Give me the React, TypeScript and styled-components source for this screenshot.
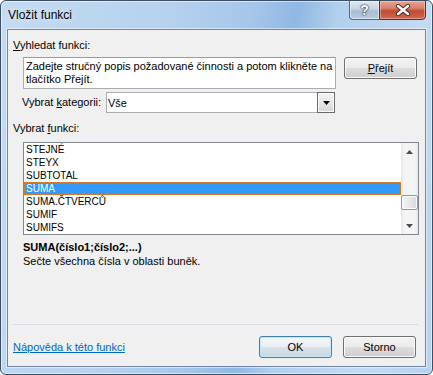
import styled, { createGlobalStyle } from 'styled-components';

const GlobalStyle = createGlobalStyle`
  html, body {
    margin: 0;
    padding: 0;
    background: #ffffff;
  }
  body {
    font-family: 'Liberation Sans', Arial, sans-serif;
    font-size: 11px;
    color: #000;
  }
`;

const functions = ['STEJNÉ', 'STEYX', 'SUBTOTAL', 'SUMA', 'SUMA.ČTVERCŮ', 'SUMIF', 'SUMIFS'];
const selected = 'SUMA';

const App = () => {
  return (
    <>
      <GlobalStyle />
      <S.Window>
        <S.TitleBar>
          <S.Title>Vložit funkci</S.Title>
          <S.CaptionButtons>
            <S.HelpButton>?</S.HelpButton>
            <S.CloseButton>
              <svg width="16" height="12" viewBox="0 0 16 12">
                <path d="M3 2 L13 10 M13 2 L3 10" stroke="#4a2a26" strokeWidth="4.2" strokeLinecap="round" />
                <path d="M3 2 L13 10 M13 2 L3 10" stroke="#ffffff" strokeWidth="2.4" strokeLinecap="round" />
              </svg>
            </S.CloseButton>
          </S.CaptionButtons>
        </S.TitleBar>

        <S.Client>
          <S.Label $indent={5} $top={8}>
            <u>V</u>yhledat funkci:
          </S.Label>
          <S.SearchRow>
            <S.SearchBox>
              Zadejte stručný popis požadované činnosti a potom klikněte na
              <br />
              tlačítko Přejít.
            </S.SearchBox>
            <S.Button>
              <u>P</u>řejít
            </S.Button>
          </S.SearchRow>

          <S.CategoryRow>
            <S.CategoryLabel>
              Vybrat <u>k</u>ategorii:
            </S.CategoryLabel>
            <S.Select>
              <S.SelectValue>Vše</S.SelectValue>
              <S.DropButton>
                <svg width="7" height="4" viewBox="0 0 7 4">
                  <path d="M0 0 H7 L3.5 4 Z" fill="#000" />
                </svg>
              </S.DropButton>
            </S.Select>
          </S.CategoryRow>

          <S.Label $indent={5} $top={8}>
            Vybrat <u>f</u>unkci:
          </S.Label>
          <S.ListBox>
            <S.Rows>
              {functions.map((name) => (
                <S.Row key={name} $active={name === selected}>
                  {name}
                </S.Row>
              ))}
            </S.Rows>
            <S.ScrollBar>
              <S.ScrollArrow>
                <svg width="7" height="4" viewBox="0 0 7 4">
                  <path d="M3.5 0 L7 4 H0 Z" fill="#4b4b4b" />
                </svg>
              </S.ScrollArrow>
              <S.Track>
                <S.Thumb />
              </S.Track>
              <S.ScrollArrow>
                <svg width="7" height="4" viewBox="0 0 7 4">
                  <path d="M0 0 H7 L3.5 4 Z" fill="#4b4b4b" />
                </svg>
              </S.ScrollArrow>
            </S.ScrollBar>
          </S.ListBox>

          <S.Signature>SUMA(číslo1;číslo2;...)</S.Signature>
          <S.Description>Sečte všechna čísla v oblasti buněk.</S.Description>

          <S.Separator />

          <S.Footer>
            <S.HelpLink href="#">Nápověda k této funkci</S.HelpLink>
            <S.FooterButtons>
              <S.Button $default>OK</S.Button>
              <S.Button>Storno</S.Button>
            </S.FooterButtons>
          </S.Footer>
        </S.Client>
      </S.Window>
    </>
  );
};

export default App;

const S = {
  Window: styled.div`
    box-sizing: border-box;
    width: 433px;
    height: 375px;
    display: flex;
    flex-direction: column;
    border: 1px solid #3c4e63;
    border-radius: 6px;
    box-shadow: inset 0 0 0 1px rgba(255, 255, 255, 0.55);
    background: linear-gradient(
      100deg,
      #c4dbf2 0%,
      #b6d1ee 35%,
      #a4c5ea 52%,
      #8fb8e3 60%,
      #b2cfee 68%,
      #c3daf2 85%,
      #b9d3ef 100%
    );
    overflow: hidden;
  `,
  TitleBar: styled.div`
    height: 28px;
    display: flex;
    align-items: flex-start;
    padding: 0 6px 0 7px;
  `,
  Title: styled.div`
    font-size: 12px;
    line-height: 15px;
    margin-top: 7px;
    color: #000;
    text-shadow: 0 0 6px rgba(255, 255, 255, 0.9);
  `,
  CaptionButtons: styled.div`
    margin-left: auto;
    margin-top: -1px;
    display: flex;
  `,
  HelpButton: styled.div`
    box-sizing: border-box;
    width: 30px;
    height: 20px;
    border: 1px solid #56687e;
    border-right: none;
    border-radius: 0 0 0 4px;
    background: linear-gradient(#dfe8f2 0%, #c5d4e4 45%, #a9bdd3 55%, #b9cbe0 100%);
    box-shadow: inset 0 0 0 1px rgba(255, 255, 255, 0.5);
    display: flex;
    align-items: center;
    justify-content: center;
    font-weight: bold;
    font-size: 14px;
    color: #fff;
    text-shadow: 0 0 1px #2c3a4a, 0 0 1px #2c3a4a, 0 0 2px #2c3a4a;
  `,
  CloseButton: styled.div`
    box-sizing: border-box;
    width: 47px;
    height: 20px;
    border: 1px solid #5e2a22;
    border-radius: 0 0 4px 0;
    background: linear-gradient(#e8a595 0%, #d9806c 40%, #c24a33 55%, #cf6a4f 100%);
    box-shadow: inset 0 0 0 1px rgba(255, 220, 210, 0.45);
    display: flex;
    align-items: center;
    justify-content: center;
  `,
  Client: styled.div`
    flex: 1;
    margin: 0 6px 7px 6px;
    border: 1px solid #6f87a3;
    box-shadow: 0 0 0 1px rgba(255, 255, 255, 0.5);
    background: #f0f0f0;
    display: flex;
    flex-direction: column;
  `,
  Label: styled.div<{ $indent: number; $top: number }>`
    line-height: 15px;
    padding-left: ${(p) => p.$indent}px;
    margin-top: ${(p) => p.$top}px;
  `,
  SearchRow: styled.div`
    display: flex;
    align-items: flex-start;
    gap: 8px;
    margin-top: 4px;
    padding-left: 15px;
  `,
  SearchBox: styled.div`
    box-sizing: border-box;
    width: 313px;
    height: 32px;
    border: 1px solid #abadb3;
    border-top-color: #9a9ca3;
    background: #fff;
    padding: 2px 2px 0 2px;
    line-height: 13px;
    white-space: nowrap;
  `,
  Button: styled.div<{ $default?: boolean }>`
    box-sizing: border-box;
    width: 73px;
    height: 22px;
    border: 1px solid ${(p) => (p.$default ? '#3c7fb1' : '#707070')};
    border-radius: 3px;
    background: ${(p) =>
      p.$default
        ? 'linear-gradient(#f3f7fa 0%, #e8eef3 50%, #d9e2ea 50%, #ccd7e0 100%)'
        : 'linear-gradient(#f2f2f2 0%, #ebebeb 50%, #dddddd 50%, #cfcfcf 100%)'};
    box-shadow: inset 0 0 0 1px ${(p) => (p.$default ? '#c9e6f8' : '#fbfbfb')};
    display: flex;
    align-items: center;
    justify-content: center;
    line-height: 13px;
  `,
  CategoryRow: styled.div`
    display: flex;
    align-items: center;
    margin-top: 3px;
  `,
  CategoryLabel: styled.div`
    box-sizing: border-box;
    width: 98px;
    padding-left: 14px;
    line-height: 15px;
  `,
  Select: styled.div`
    box-sizing: border-box;
    width: 229px;
    height: 21px;
    border: 1px solid #abadb3;
    background: #fff;
    display: flex;
    align-items: stretch;
  `,
  SelectValue: styled.div`
    flex: 1;
    padding-left: 1px;
    display: flex;
    align-items: center;
  `,
  DropButton: styled.div`
    box-sizing: border-box;
    width: 18px;
    margin: -1px -1px -1px 0;
    border: 1px solid #6a6a6a;
    background: linear-gradient(#f4f4f4 0%, #e6e6e6 50%, #d6d6d6 100%);
    box-shadow: inset 0 0 0 1px #fdfdfd;
    display: flex;
    align-items: center;
    justify-content: center;
  `,
  ListBox: styled.div`
    box-sizing: border-box;
    width: 396px;
    height: 93px;
    margin: 6px 0 0 15px;
    border: 1px solid #828790;
    background: #fff;
    display: flex;
  `,
  Rows: styled.div`
    flex: 1;
    display: flex;
    flex-direction: column;
  `,
  Row: styled.div<{ $active: boolean }>`
    box-sizing: border-box;
    height: 13px;
    line-height: 13px;
    padding-left: 2px;
    font-size: 10px;
    background: ${(p) => (p.$active ? '#3399ff' : 'transparent')};
    color: ${(p) => (p.$active ? '#fff' : '#000')};
    outline: ${(p) => (p.$active ? '1px dotted #d9822b' : 'none')};
    outline-offset: -1px;
  `,
  ScrollBar: styled.div`
    width: 17px;
    display: flex;
    flex-direction: column;
    background: linear-gradient(90deg, #e6e6e6 0%, #f4f4f4 20%, #f4f4f4 80%, #e9e9e9 100%);
  `,
  ScrollArrow: styled.div`
    height: 17px;
    display: flex;
    align-items: center;
    justify-content: center;
  `,
  Track: styled.div`
    flex: 1;
  `,
  Thumb: styled.div`
    box-sizing: border-box;
    height: 15px;
    margin-top: 35px;
    border: 1px solid #979797;
    border-radius: 2px;
    background: linear-gradient(90deg, #f4f4f4 0%, #e8e8e8 50%, #d8d8d8 100%);
    box-shadow: inset 0 0 0 1px #fafafa;
  `,
  Signature: styled.div`
    margin-top: 5px;
    padding-left: 15px;
    font-weight: bold;
    line-height: 14px;
  `,
  Description: styled.div`
    padding-left: 15px;
    line-height: 14px;
  `,
  Separator: styled.div`
    height: 1px;
    margin: 56px 7px 0 5px;
    background: #d5dce3;
  `,
  Footer: styled.div`
    display: flex;
    align-items: center;
    margin-top: 11px;
    padding: 0 9px 0 5px;
  `,
  HelpLink: styled.a`
    color: #0066cc;
    text-decoration: underline;
    line-height: 14px;
  `,
  FooterButtons: styled.div`
    margin-left: auto;
    display: flex;
    gap: 11px;
  `,
};
